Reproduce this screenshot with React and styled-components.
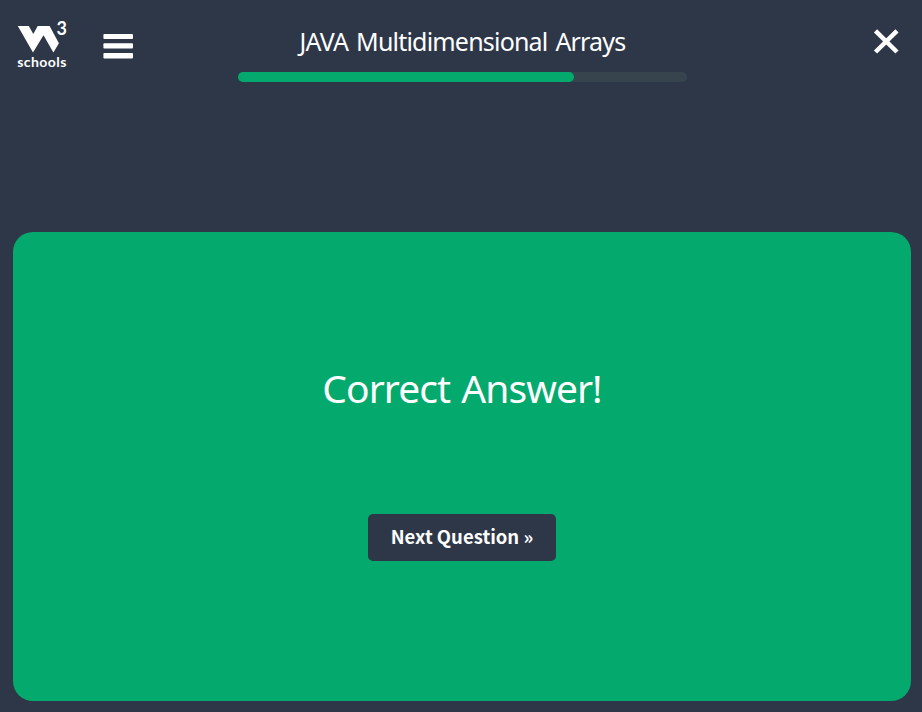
import React from "react";
import styled, { createGlobalStyle } from "styled-components";

const GlobalStyle = createGlobalStyle`
  * { box-sizing: border-box; }
  body { margin: 0; background: #2e3748; }
`;

const Page = styled.div`
  height: 712px;
  padding: 0 11px 11px 13px;
  display: flex;
  flex-direction: column;
  background: #2e3748;
  color: #fff;
  font-family: "Noto Sans", sans-serif;
`;

const Header = styled.header`
  height: 232px;
  flex: none;
  display: grid;
  grid-template-columns: 225px 449px 1fr;
  align-items: start;
`;

const HeaderLeft = styled.div`
  display: flex;
  align-items: flex-start;
`;

const IconButton = styled.button`
  display: block;
  padding: 0;
  border: 0;
  background: none;
  color: #fff;
  cursor: pointer;
`;

const LogoLink = styled.a`
  display: block;
  width: 58px;
  height: 56px;
  margin-top: 18px;
  color: #fff;
`;

const LogoText = styled.text`
  fill: #fff;
  font-family: "Lato", sans-serif;
  font-size: ${(p) => p.$size}px;
  font-weight: 700;
`;

const MenuButton = styled(IconButton)`
  margin: 33px 0 0 32px;
`;

const CloseButton = styled(IconButton)`
  justify-self: end;
  margin: 28px 12px 0 0;
`;

const Progress = styled.div`
  display: flex;
  flex-direction: column;
  align-items: center;
`;

const Title = styled.h1`
  margin: 24px 0 12px;
  height: 36px;
  line-height: 35px;
  font-size: 25px;
  font-weight: 400;
  letter-spacing: -0.8px;
  word-spacing: 2.2px;
  white-space: nowrap;
`;

const Track = styled.div`
  width: 449px;
  height: 10px;
  border-radius: 5px;
  background: #38444d;
`;

const Fill = styled.div`
  width: 336px;
  height: 10px;
  border-radius: 5px;
  background: #04aa6d;
`;

const Card = styled.main`
  flex: 1;
  display: flex;
  flex-direction: column;
  align-items: center;
  border-radius: 20px;
  background: #04aa6d;
`;

const Message = styled.h2`
  margin: 128px 0 96px;
  height: 58px;
  line-height: 56px;
  font-size: 39px;
  font-weight: 400;
  letter-spacing: -0.95px;
  word-spacing: 2px;
  white-space: nowrap;
`;

const NextButton = styled.button`
  width: 188px;
  height: 47px;
  padding: 0 0 2px;
  border: 0;
  border-radius: 5px;
  background: #2e3748;
  color: #fff;
  font-family: "Noto Sans CJK JP", sans-serif;
  font-size: 18.5px;
  font-weight: 700;
  line-height: 45px;
  white-space: nowrap;
  cursor: pointer;
`;

function Logo() {
  return (
    <LogoLink aria-label="W3Schools">
      <svg width="58" height="56" viewBox="13 18 58 56">
        <path
          fill="currentColor"
          d="M17.8 26H28.8L33.3 34L37.7 26H49.6L58.9 43.2L53.4 52.6L43.5 35.3L33 52.6Z"
        />
        <LogoText x="56.4" y="35" $size={18}>3</LogoText>
        <LogoText x="17.3" y="67" $size={14} textLength="49">schools</LogoText>
      </svg>
    </LogoLink>
  );
}

export default function App() {
  return (
    <>
      <GlobalStyle />
      <Page>
        <Header>
          <HeaderLeft>
            <Logo />
            <MenuButton aria-label="Menu">
              <svg width="30" height="27" viewBox="0 0 30 27" fill="currentColor" display="block">
                <rect x="0.4" y="1" width="29.6" height="5" rx="1" />
                <rect x="0.4" y="10.2" width="29.6" height="5.3" rx="1" />
                <rect x="0.4" y="20" width="29.6" height="5.5" rx="1" />
              </svg>
            </MenuButton>
          </HeaderLeft>
          <Progress>
            <Title>JAVA Multidimensional Arrays</Title>
            <Track>
              <Fill />
            </Track>
          </Progress>
          <CloseButton aria-label="Close">
            <svg width="26" height="27" viewBox="0 0 26 27" display="block">
              <path d="M2.5 2.8L24 24M24 2.8L2.5 24" stroke="currentColor" strokeWidth="4.5" />
            </svg>
          </CloseButton>
        </Header>
        <Card>
          <Message>Correct Answer!</Message>
          <NextButton>Next Question »</NextButton>
        </Card>
      </Page>
    </>
  );
}
